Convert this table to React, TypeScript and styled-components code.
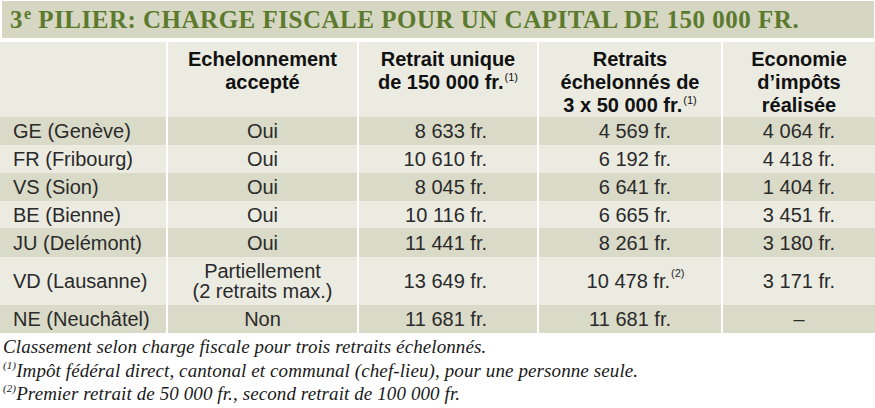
import React from 'react'
import styled, { createGlobalStyle } from 'styled-components';

const GlobalStyle = createGlobalStyle`
  body {
    margin: 0;
    background: #ffffff;
    font-family: "Liberation Sans", Arial, sans-serif;
  }
`;

const Page = styled.div`
  width: 875px;
  display: flex;
  flex-direction: column;
`;

const TitleBand = styled.div`
  height: 37px;
  margin: 1px 1px 4px 2px;
  padding-left: 8px;
  display: flex;
  align-items: center;
  background-color: #d5d7c2;
  color: #5c7a2e;
  font-family: "Liberation Serif", "Times New Roman", serif;
  font-weight: bold;
  font-size: 25px;
  letter-spacing: 0.5px;
  white-space: nowrap;
`;

const TitleSup = styled.span`
  font-size: 16px;
  position: relative;
  top: -6px;
  margin-left: 1px;
`;

const Row = styled.div<{ $tone: string; $height: number }>`
  --tone: ${(p) => p.$tone};
  display: grid;
  grid-template-columns: 166px 189px 178px 182px 1fr;
  column-gap: 2px;
  min-height: ${(p) => p.$height}px;
  background: #ffffff;
`;

const Cell = styled.div<{ $align?: 'left' | 'center' | 'right' }>`
  background: var(--tone);
  display: flex;
  align-items: center;
  justify-content: ${(p) =>
    p.$align === 'right' ? 'flex-end' : p.$align === 'left' ? 'flex-start' : 'center'};
  text-align: ${(p) => p.$align || 'center'};
  padding: 0 ${(p) => (p.$align === 'right' ? '50px' : '0')} 0 ${(p) => (p.$align === 'left' ? '13px' : '0')};
  font-size: 20px;
  line-height: 20px;
  color: #2a2a2a;
  white-space: nowrap;
`;

const HeadCell = styled.div`
  background: var(--tone);
  padding-top: 6px;
  text-align: center;
  font-weight: bold;
  font-size: 20px;
  line-height: 23px;
  color: #111111;
`;

const Sup = styled.sup<{ $hang?: boolean }>`
  font-size: 11px;
  line-height: 0;
  vertical-align: 0;
  position: relative;
  top: -8px;
  margin-left: 1px;
  font-weight: normal;
  ${(p) => p.$hang && 'display: inline-block; width: 0; white-space: nowrap;'}
`;

const Notes = styled.div`
  padding: 2px 0 0 3px;
  font-family: "Liberation Serif", "Times New Roman", serif;
  font-style: italic;
  font-size: 19px;
  letter-spacing: 0.1px;
  line-height: 23.5px;
  color: #1a1a1a;
`;

const NoteSup = styled.sup`
  font-size: 11px;
  line-height: 0;
  vertical-align: 0;
  position: relative;
  top: -8px;
`;

const DARK = '#dadac8';
const LIGHT = '#ebebe2';

type Canton = {
  name: string;
  accepted: React.ReactNode;
  single: string;
  staggered: string;
  staggeredNote?: string;
  saving: string;
  height: number;
};

const cantons: Canton[] = [
  { name: 'GE (Genève)', accepted: 'Oui', single: '8 633 fr.', staggered: '4 569 fr.', saving: '4 064 fr.', height: 28 },
  { name: 'FR (Fribourg)', accepted: 'Oui', single: '10 610 fr.', staggered: '6 192 fr.', saving: '4 418 fr.', height: 28 },
  { name: 'VS (Sion)', accepted: 'Oui', single: '8 045 fr.', staggered: '6 641 fr.', saving: '1 404 fr.', height: 28 },
  { name: 'BE (Bienne)', accepted: 'Oui', single: '10 116 fr.', staggered: '6 665 fr.', saving: '3 451 fr.', height: 27 },
  { name: 'JU (Delémont)', accepted: 'Oui', single: '11 441 fr.', staggered: '8 261 fr.', saving: '3 180 fr.', height: 29 },
  {
    name: 'VD (Lausanne)',
    accepted: (
      <>
        Partiellement
        <br />
        (2 retraits max.)
      </>
    ),
    single: '13 649 fr.',
    staggered: '10 478 fr.',
    staggeredNote: '(2)',
    saving: '3 171 fr.',
    height: 48,
  },
  { name: 'NE (Neuchâtel)', accepted: 'Non', single: '11 681 fr.', staggered: '11 681 fr.', saving: '–', height: 28 },
];

export default function App() {
  return (
    <Page>
      <GlobalStyle />
      <TitleBand>
        3<TitleSup>e</TitleSup>&nbsp;PILIER: CHARGE FISCALE POUR UN CAPITAL DE 150 000 FR.
      </TitleBand>

      <Row $tone={LIGHT} $height={75}>
        <HeadCell />
        <HeadCell>
          Echelonnement
          <br />
          accepté
        </HeadCell>
        <HeadCell>
          Retrait unique
          <br />
          de 150 000 fr.<Sup>(1)</Sup>
        </HeadCell>
        <HeadCell>
          Retraits
          <br />
          échelonnés de
          <br />
          3 x 50 000 fr.<Sup>(1)</Sup>
        </HeadCell>
        <HeadCell>
          Economie
          <br />
          d’impôts
          <br />
          réalisée
        </HeadCell>
      </Row>

      {cantons.map((c, i) => (
        <Row key={c.name} $tone={i % 2 === 0 ? DARK : LIGHT} $height={c.height}>
          <Cell $align="left">{c.name}</Cell>
          <Cell>{c.accepted}</Cell>
          <Cell $align="right">{c.single}</Cell>
          <Cell $align="right">
            {c.staggered}
            {c.staggeredNote && <Sup $hang>{c.staggeredNote}</Sup>}
          </Cell>
          <Cell>{c.saving}</Cell>
        </Row>
      ))}

      <Notes>
        Classement selon charge fiscale pour trois retraits échelonnés.
        <br />
        <NoteSup>(1)</NoteSup>Impôt fédéral direct, cantonal et communal (chef-lieu), pour une personne seule.
        <br />
        <NoteSup>(2)</NoteSup>Premier retrait de 50 000 fr., second retrait de 100 000 fr.
      </Notes>
    </Page>
  );
}
